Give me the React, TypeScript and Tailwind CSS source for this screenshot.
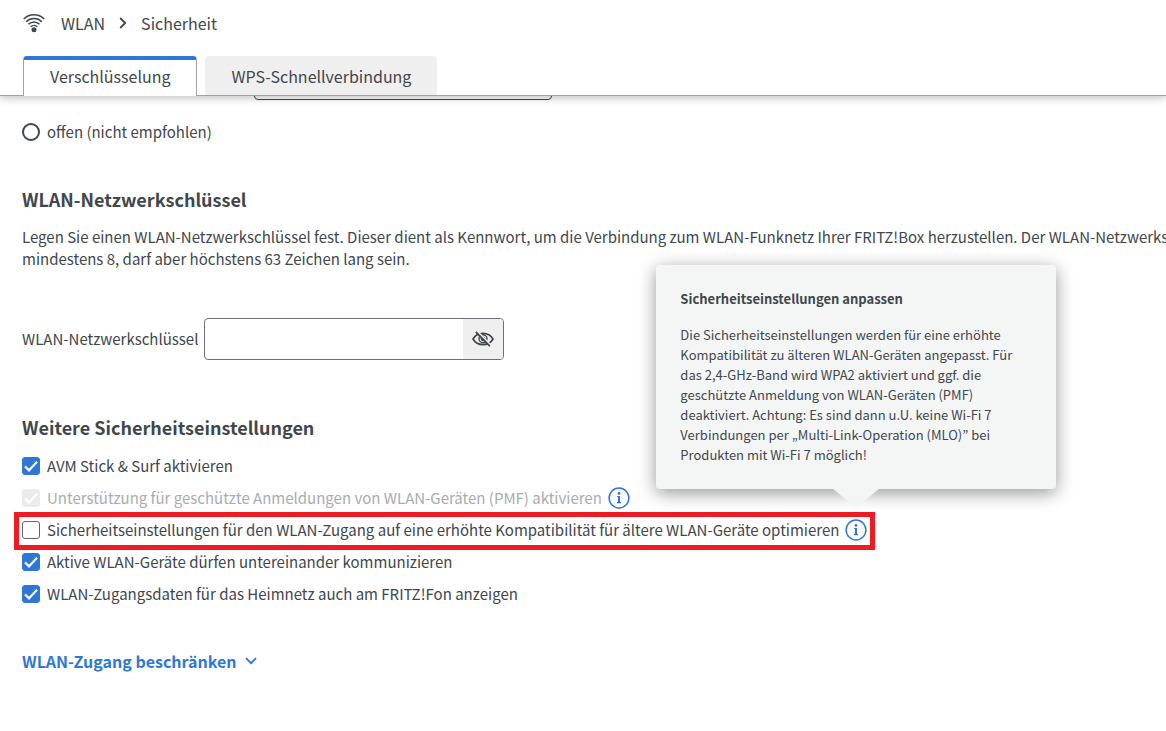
import { ReactNode, useId } from "react";

function Heading({ children }: { children: ReactNode }) {
  return <h2 className="text-lg leading-[22px] font-bold">{children}</h2>;
}

function WifiIcon() {
  return (
    <svg viewBox="0 0 22 20" className="w-[22px] h-5" fill="none" stroke="currentColor" aria-hidden="true">
      <path d="M.8 6a14.4 14.4 0 0 1 20.4 0" strokeWidth="1.7" />
      <path d="M3.2 8.7a11 11 0 0 1 15.6 0" strokeWidth="1.6" />
      <path d="M5.5 11.3a7.8 7.8 0 0 1 11 0" strokeWidth="1.6" />
      <path d="M7.7 13.8a4.7 4.7 0 0 1 6.6 0" strokeWidth="1.5" />
      <circle cx="11" cy="16.8" r="2.5" fill="currentColor" stroke="none" />
    </svg>
  );
}

function EyeOffIcon() {
  return (
    <svg viewBox="0 0 22 18" className="w-[22px] h-[18px]" fill="none" stroke="currentColor" aria-hidden="true">
      <path d="M1 9c2-3.6 5.7-5.6 10-5.6S19 5.4 21 9c-2 3.6-5.7 5.6-10 5.6S3 12.6 1 9z" strokeWidth="1.6" />
      <circle cx="11" cy="8.8" r="4" strokeWidth="1.4" />
      <circle cx="11" cy="8.8" r="2.4" fill="currentColor" stroke="none" />
      <path d="M5 1.2 18.6 15.2" stroke="#efefef" strokeWidth="2" />
      <path d="M3.8 1.8 17.8 16.2" strokeWidth="1.8" />
    </svg>
  );
}

function InfoButton({ children }: { children?: ReactNode }) {
  return (
    <span className="relative flex ml-1.5">
      <button type="button" aria-label="Information" className="text-[#2e77d6]">
        <svg viewBox="0 0 22 22" className="size-[22px] block" fill="none" aria-hidden="true">
          <circle cx="11" cy="11" r="9.9" stroke="currentColor" strokeWidth="1.5" />
          <path d="M11 9v7" stroke="currentColor" strokeWidth="2" />
          <path d="M9.2 9.5H11M9 15.6h4" stroke="currentColor" strokeWidth="1.1" />
          <circle cx="11" cy="6.4" r="1.4" fill="currentColor" />
        </svg>
      </button>
      {children}
    </span>
  );
}

function Tooltip({ title, children }: { title: string; children: ReactNode }) {
  return (
    <div
      role="tooltip"
      className="
        absolute z-20 bottom-full left-1/2 -translate-x-1/2 mb-[30px]
        w-[400px] p-6 rounded
        bg-[#f4f6f6] text-[13px] leading-5
        shadow-[0_4px_18px_rgba(0,0,0,0.42)]
      "
    >
      <h3 className="font-bold mb-4">{title}</h3>
      <p>{children}</p>
      <svg viewBox="0 0 48 20" className="absolute top-full left-1/2 -translate-x-1/2 -mt-px w-12 h-5" aria-hidden="true">
        <path d="M0 0h48L24 20z" fill="#f4f6f6" />
      </svg>
    </div>
  );
}

function CheckRow({
  label,
  checked,
  disabled,
  marked,
  children,
}: {
  label: string;
  checked?: boolean;
  disabled?: boolean;
  marked?: boolean;
  children?: ReactNode;
}) {
  const id = useId();
  return (
    <li className="relative flex items-center w-fit h-8">
      <span className="grid mr-[7px]">
        <input
          id={id}
          type="checkbox"
          defaultChecked={checked}
          disabled={disabled}
          className="
            peer appearance-none col-start-1 row-start-1 size-[18px]
            border border-[#5f656b] rounded-[3px] bg-white
            checked:bg-[#2e77d6] checked:border-[#2e77d6]
            disabled:bg-[#ebebeb] disabled:border-[#ebebeb]
          "
        />
        <svg
          viewBox="0 0 18 18"
          className="col-start-1 row-start-1 size-[18px] pointer-events-none invisible peer-checked:visible"
          fill="none"
          aria-hidden="true"
        >
          <path d="M3 9.4l4 4 8-8.6" stroke="#fff" strokeWidth="2.2" />
        </svg>
      </span>
      <label htmlFor={id} className={disabled ? "text-[#a9acae]" : ""}>
        {label}
      </label>
      {children}
      {marked && (
        <span className="absolute -top-0.5 -bottom-1 -inset-x-2 border-5 border-[#ed1c24] pointer-events-none" />
      )}
    </li>
  );
}

export default function App() {
  return (
    <div className="overflow-hidden min-h-screen bg-white text-[#3f464c] text-[15px] leading-[22px] whitespace-nowrap font-['Noto_Sans_CJK_KR','Noto_Sans',sans-serif]">
      <header className="relative z-10 bg-white shadow-[0_2px_8px_rgba(0,0,0,0.25)]">
        <nav className="flex items-center h-[46px] pl-[23px] text-base" aria-label="Pfad">
          <WifiIcon />
          <a href="#wlan" className="ml-4">WLAN</a>
          <svg viewBox="0 0 8 12" className="w-2 h-3 mx-3.5" fill="none" aria-hidden="true">
            <path d="M1.2 1l5 5-5 5" stroke="currentColor" strokeWidth="1.8" />
          </svg>
          <a href="#sicherheit">Sicherheit</a>
        </nav>
        <div role="tablist" className="flex gap-2 mt-2.5 pl-[23px] border-b border-[#a0a3a6] text-base">
          <button
            role="tab"
            aria-selected="true"
            className="h-10 -mb-px px-[26px] pb-1 bg-white border-x border-[#a0a3a6] border-t-4 border-t-[#2e77d6] rounded-t"
          >
            Verschlüsselung
          </button>
          <button role="tab" aria-selected="false" className="h-[39px] px-[26px] bg-[#efefef] rounded-t">
            WPS-Schnellverbindung
          </button>
        </div>
      </header>

      <main className="pl-[22px] pb-12">
        <select
          aria-label="WPA-Modus"
          className="block appearance-none w-[298px] h-10 -mt-9 ml-58 border border-[#3f464c] rounded bg-white"
        />
        <div className="flex items-center h-8 mt-4">
          <input
            id="offen"
            type="radio"
            name="modus"
            className="appearance-none size-[18px] mr-[7px] border-2 border-[#3f464c] rounded-full checked:bg-[#2e77d6]"
          />
          <label htmlFor="offen">offen (nicht empfohlen)</label>
        </div>

        <section className="mt-10">
          <Heading>WLAN-Netzwerkschlüssel</Heading>
          <p className="mt-4">
            Legen Sie einen WLAN-Netzwerkschlüssel fest. Dieser dient als Kennwort, um die Verbindung zum
            WLAN-Funknetz Ihrer FRITZ!Box herzustellen. Der WLAN-Netzwerkschlüssel muss
            <br />
            mindestens 8, darf aber höchstens 63 Zeichen lang sein.
          </p>
          <div className="flex items-center mt-12">
            <label htmlFor="key">WLAN-Netzwerkschlüssel</label>
            <div className="flex w-[300px] h-[42px] ml-1.5 border border-[#6c7176] rounded overflow-hidden">
              <input id="key" type="password" className="flex-1 min-w-0 px-3 outline-none" />
              <button type="button" aria-label="Anzeigen" className="flex items-center justify-center w-10 bg-[#efefef]">
                <EyeOffIcon />
              </button>
            </div>
          </div>
        </section>

        <section className="mt-14">
          <Heading>Weitere Sicherheitseinstellungen</Heading>
          <ul className="mt-3">
            <CheckRow label="AVM Stick &amp; Surf aktivieren" checked />
            <CheckRow label="Unterstützung für geschützte Anmeldungen von WLAN-Geräten (PMF) aktivieren" checked disabled>
              <InfoButton />
            </CheckRow>
            <CheckRow
              label="Sicherheitseinstellungen für den WLAN-Zugang auf eine erhöhte Kompatibilität für ältere WLAN-Geräte optimieren"
              marked
            >
              <InfoButton>
                <Tooltip title="Sicherheitseinstellungen anpassen">
                  Die Sicherheitseinstellungen werden für eine erhöhte
                  <br />
                  Kompatibilität zu älteren WLAN-Geräten angepasst. Für
                  <br />
                  das 2,4-GHz-Band wird WPA2 aktiviert und ggf. die
                  <br />
                  geschützte Anmeldung von WLAN-Geräten (PMF)
                  <br />
                  deaktiviert. Achtung: Es sind dann u.U. keine Wi-Fi 7
                  <br />
                  Verbindungen per „Multi-Link-Operation (MLO)” bei
                  <br />
                  Produkten mit Wi-Fi 7 möglich!
                </Tooltip>
              </InfoButton>
            </CheckRow>
            <CheckRow label="Aktive WLAN-Geräte dürfen untereinander kommunizieren" checked />
            <CheckRow label="WLAN-Zugangsdaten für das Heimnetz auch am FRITZ!Fon anzeigen" checked />
          </ul>
        </section>

        <button type="button" className="flex items-center mt-10 text-base leading-[22px] font-bold text-[#2e77d6]">
          WLAN-Zugang beschränken
          <svg viewBox="0 0 12 8" className="w-3 h-2 ml-2" fill="none" aria-hidden="true">
            <path d="M1 1.2l5 5 5-5" stroke="currentColor" strokeWidth="1.9" />
          </svg>
        </button>
      </main>
    </div>
  );
}
